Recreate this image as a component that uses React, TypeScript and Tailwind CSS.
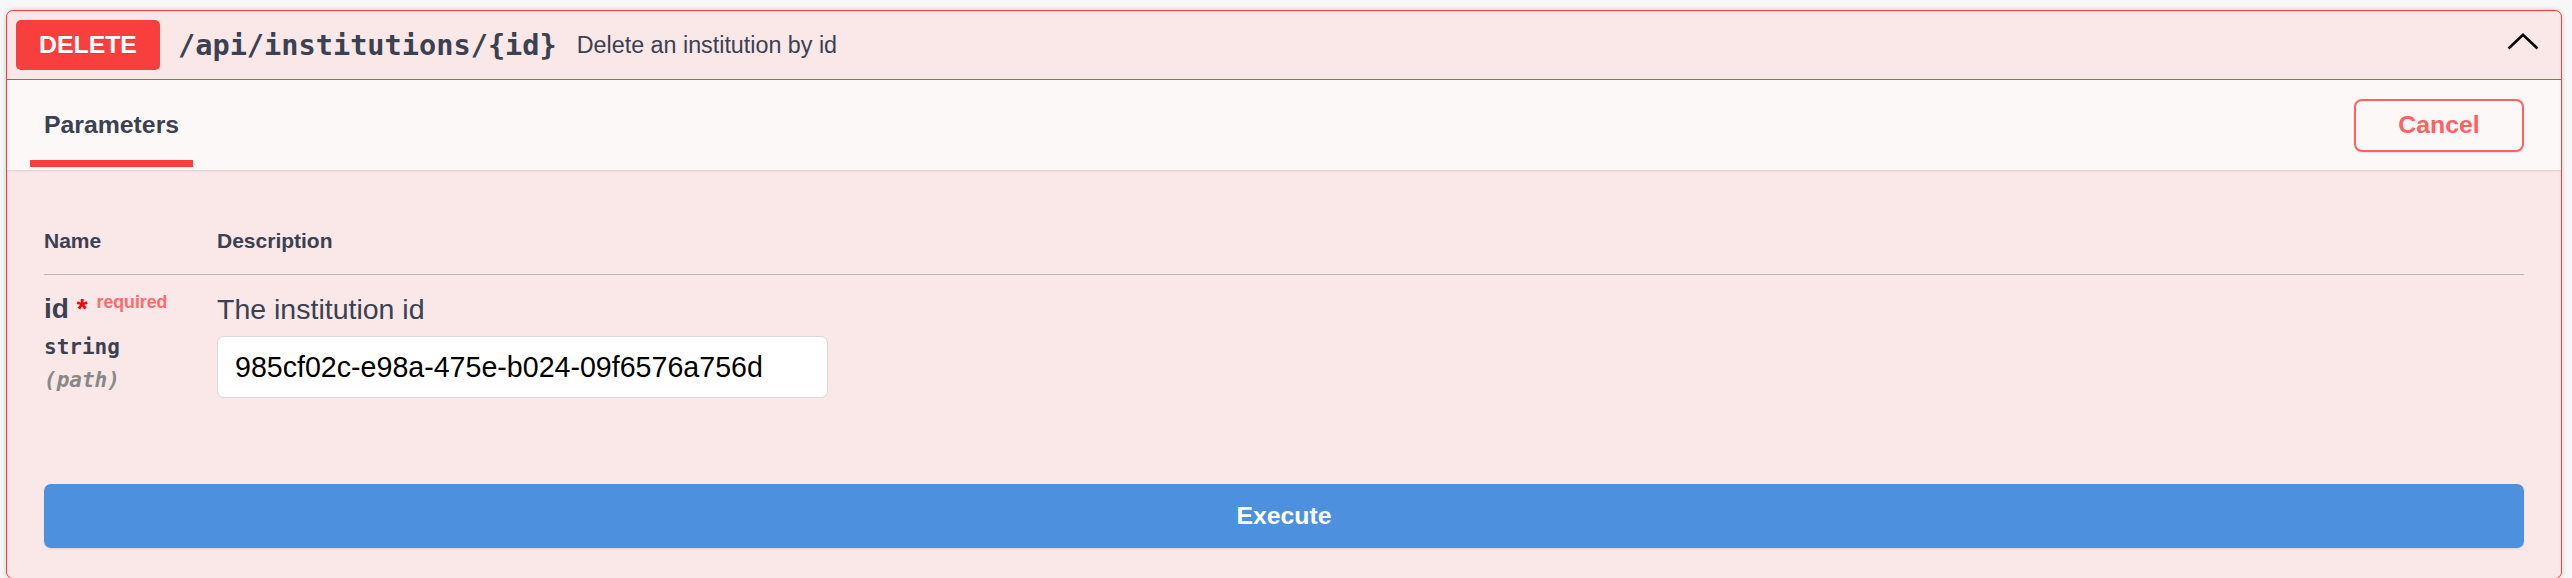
import React from "react";

function ChevronUp() {
  return (
    <svg width="32" height="17" viewBox="0 0 32 17" className="ml-auto mb-[7px]">
      <polyline
        points="1.5,15.5 16,1.8 30.5,15.5"
        fill="none"
        stroke="#000"
        strokeWidth="2.6"
      />
    </svg>
  );
}

export default function App() {
  return (
    <div className="min-h-screen bg-[#f7f7f7] pt-[10px] pl-[6px] pr-[10px] font-['Liberation_Sans',Arial,sans-serif] text-[#3b4151]">
      <div className="rounded-[7px] border border-[#f93e3e] bg-[#fae7e7] shadow-[0_0_5px_rgba(0,0,0,0.19)] overflow-hidden">
        {/* summary */}
        <div className="flex items-center h-[69px] border-b border-[#f93e3e] pl-[9px] pr-[22px]">
          <span className="flex items-center justify-center w-[144px] h-[50px] rounded-[5px] bg-[#f93e3e] text-white font-bold text-[24.8px] [text-shadow:0_1px_0_rgba(0,0,0,0.1)]">
            DELETE
          </span>
          <span className="ml-[18px] font-['DejaVu_Sans_Mono',monospace] font-bold text-[28.6px]">
            /api/institutions/{"{id}"}
          </span>
          <span className="ml-[20px] text-[23.3px]">Delete an institution by id</span>
          <ChevronUp />
        </div>

        {/* section header */}
        <div className="flex items-center justify-between h-[90px] px-[37px] bg-[#fdf8f8] shadow-[0_1px_2px_rgba(0,0,0,0.1)]">
          <div className="relative h-full flex items-center">
            <h4 className="font-bold text-[24.8px]">Parameters</h4>
            <span className="absolute bottom-[3px] -left-[14px] -right-[14px] h-[7px] bg-[#f93e3e]" />
          </div>
          <button className="w-[170px] h-[53px] rounded-[8px] border-2 border-[#ff6060] text-[#ff6060] font-bold text-[24.8px] shadow-[0_1px_2px_rgba(0,0,0,0.1)]">
            Cancel
          </button>
        </div>

        {/* parameters */}
        <div className="px-[37px] pb-[30px]">
          <div className="flex pt-[60px] pb-[23px] border-b border-[#bcb3b7] text-[21px] leading-[21px] font-bold">
            <div className="w-[173px]">Name</div>
            <div>Description</div>
          </div>

          <div className="flex pt-[17px]">
            <div className="w-[173px]">
              <div className="text-[28px] leading-[34px] font-bold whitespace-nowrap">
                id
                <span className="text-[#ff0000]">{"\u00a0*"}</span>
                <span className="relative -top-[10px] pl-[9px] text-[17.7px] leading-none text-[#ff6b6b]">
                  required
                </span>
              </div>
              <div className="mt-[9px] font-['DejaVu_Sans_Mono',monospace] font-bold text-[21px] leading-[24px]">
                string
              </div>
              <div className="mt-[9px] font-['DejaVu_Sans_Mono',monospace] font-bold italic text-[21px] leading-[24px] text-[#888888]">
                (path)
              </div>
            </div>
            <div>
              <p className="text-[28.5px] leading-[34px]">The institution id</p>
              <input
                readOnly
                value="985cf02c-e98a-475e-b024-09f6576a756d"
                className="mt-[10px] w-[611px] h-[62px] rounded-[7px] border border-[#d9d9d9] bg-white pl-[17px] text-[28.6px] text-black outline-none"
              />
            </div>
          </div>

          <button className="mt-[86px] w-full h-[64px] rounded-[7px] bg-[#4d91de] text-white font-bold text-[24.8px] shadow-[0_1px_2px_rgba(0,0,0,0.1)]">
            Execute
          </button>
        </div>
      </div>
    </div>
  );
}
